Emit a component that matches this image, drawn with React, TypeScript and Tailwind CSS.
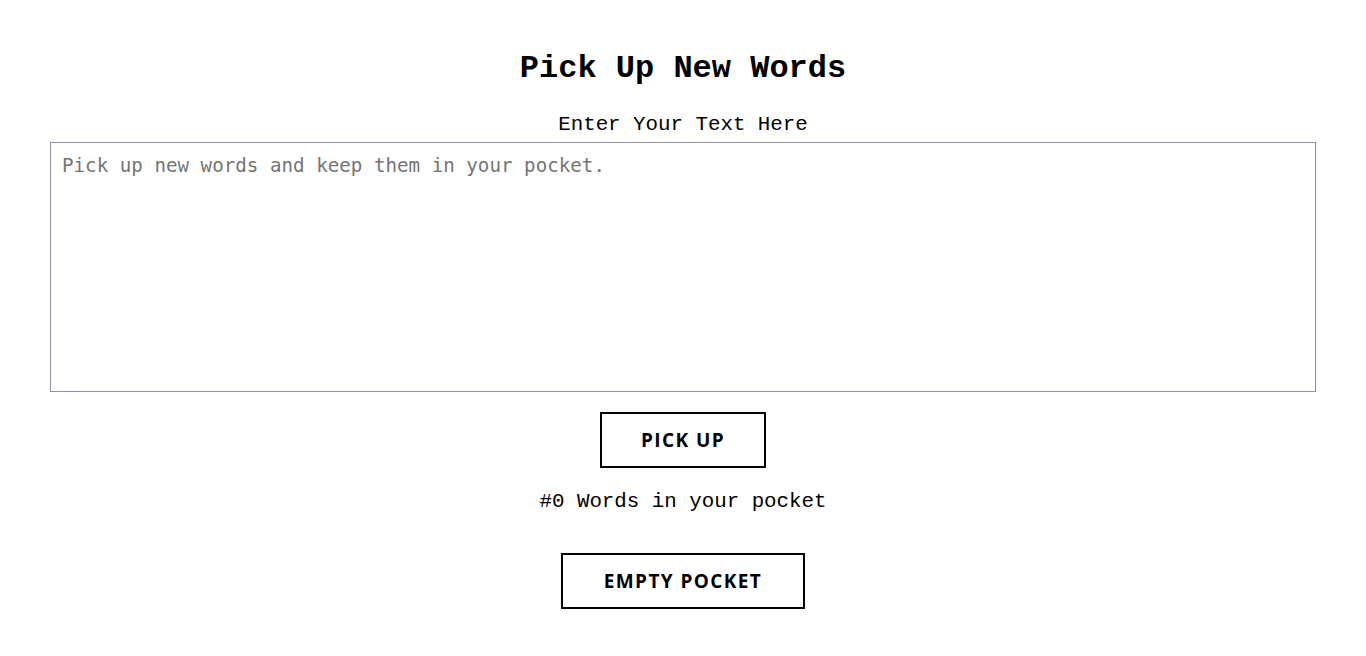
export default function App() {
  return (
    <div className="min-h-screen bg-white flex flex-col items-center px-[50px] pt-[46px] font-['Liberation_Mono',monospace] text-black">
      <h1 className="text-[32px] leading-[46px] font-bold">Pick Up New Words</h1>
      <label className="mt-[19px] text-[20.8px] leading-[28px]" htmlFor="words">
        Enter Your Text Here
      </label>
      <textarea
        id="words"
        className="mt-[3px] w-full h-[250px] border border-[#8f8f9d] px-[11px] py-[9px] font-['DejaVu_Sans_Mono',monospace] text-[19.2px] leading-[28px] placeholder:text-[#757575] resize-none outline-none"
        placeholder="Pick up new words and keep them in your pocket."
      />
      <button className="mt-[20px] w-[166px] h-[56px] border-2 border-black font-['Open_Sans',sans-serif] font-bold text-[19px] tracking-[1.4px]">
        PICK UP
      </button>
      <p className="mt-[19px] text-[20.8px] leading-[30px]">#0 Words in your pocket</p>
      <button className="mt-[36px] w-[244px] h-[56px] border-2 border-black font-['Open_Sans',sans-serif] font-bold text-[19px] tracking-[1.4px]">
        EMPTY POCKET
      </button>
    </div>
  );
}
